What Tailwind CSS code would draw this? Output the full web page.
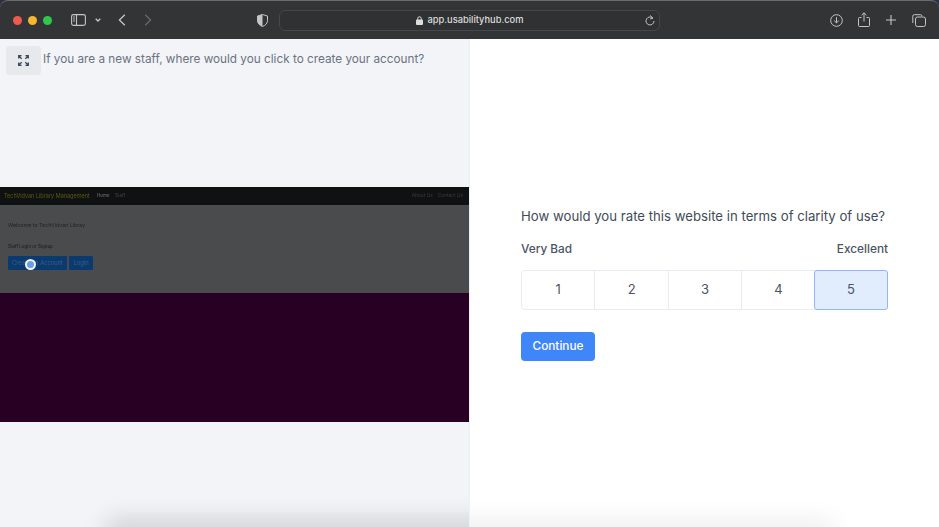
<!DOCTYPE html>
<html>
<head>
<meta charset="utf-8">
<script src="https://cdn.jsdelivr.net/npm/@tailwindcss/browser@4"></script>
</head>
<body class="font-['Inter',sans-serif] bg-[#2a3040] overflow-hidden">
<div class="relative w-[939px] h-[527px] overflow-hidden flex flex-col">
  <!-- browser chrome -->
  <div class="h-[39px] shrink-0 bg-[#333436] border-t border-[#6a6b6d] rounded-t-[8px] flex items-center text-[#c4c5c6]">
    <div class="flex items-center gap-[6px] ml-[13px]">
      <span class="w-[9px] h-[9px] rounded-full bg-[#ef5a50]"></span>
      <span class="w-[9px] h-[9px] rounded-full bg-[#f6b62e]"></span>
      <span class="w-[9px] h-[9px] rounded-full bg-[#2fc84a]"></span>
    </div>
    <svg class="ml-[19px]" width="15" height="12" viewBox="0 0 15 12" fill="none" stroke="#c4c5c6" stroke-width="1.1"><rect x="0.6" y="0.6" width="13.8" height="10.8" rx="1.8"/><path d="M5.5 .6v10.8"/><path d="M2 3h2M2 5h2M2 7h2" stroke-width="0.9"/></svg>
    <svg class="ml-[9px]" width="6" height="4" viewBox="0 0 6 4" fill="none" stroke="#c4c5c6" stroke-width="1.3"><path d="M.7.7 3 3l2.3-2.3"/></svg>
    <svg class="ml-[17px]" width="8" height="12" viewBox="0 0 8 12" fill="none" stroke="#c4c5c6" stroke-width="1.3"><path d="M6.8.8 1.4 6l5.4 5.2"/></svg>
    <svg class="ml-[18px]" width="8" height="12" viewBox="0 0 8 12" fill="none" stroke="#68696b" stroke-width="1.3"><path d="M1.2.8 6.6 6l-5.4 5.2"/></svg>
    <svg class="ml-[105px]" width="11" height="13" viewBox="0 0 11 13"><path d="M5.5.5 10.5 2v4.5c0 3-2.2 5-5 6-2.8-1-5-3-5-6V2z" fill="none" stroke="#c4c5c6"/><path d="M5.5.5 .5 2v4.500c0 3 2.200 5 5 6z" fill="#c4c5c6"/></svg>
    <div class="ml-[11px] w-[381px] h-[21px] rounded-[6px] border border-[#46474a] bg-[#303133] flex items-center relative">
      <div class="flex-1 flex items-center justify-center gap-[5px] text-[#dcdddd] text-[9.300px] font-medium">
        <svg width="7" height="9" viewBox="0 0 7 9"><path d="M1.7 4V2.600a1.800 1.800 0 0 1 3.600 0V4" fill="none" stroke="#dcdddd"/><rect y="3.600" width="7" height="5.400" rx="1" fill="#dcdddd"/></svg>
        <span>app.usabilityhub.com</span>
      </div>
      <svg class="absolute right-[4px] top-[4px]" width="10" height="11" viewBox="0 0 10 11" fill="none" stroke="#c4c5c6" stroke-width="1"><path d="M7.900 3.200A4 4 0 1 0 9 6"/><path d="M5.200.4 8 3.200 5 4" stroke-width="0.9"/></svg>
    </div>
    <svg class="ml-[170px]" width="13" height="13" viewBox="0 0 13 13" fill="none" stroke="#c4c5c6" stroke-width="1"><circle cx="6.500" cy="6.500" r="5.800"/><path d="M6.500 3.200v5.600M4.200 6.600l2.300 2.300 2.300-2.300"/></svg>
    <svg class="ml-[15px] -mt-[2px]" width="12" height="15" viewBox="0 0 12 15" fill="none" stroke="#c4c5c6" stroke-width="1"><path d="M3.500 5.500H1.500a1 1 0 0 0-1 1v7a1 1 0 0 0 1 1h9a1 1 0 0 0 1-1v-7a1 1 0 0 0-1-1H8.500"/><path d="M6 9.500V1M3.500 3.200 6 .8l2.500 2.400"/></svg>
    <svg class="ml-[16px]" width="10" height="10" viewBox="0 0 10 10" fill="none" stroke="#c4c5c6" stroke-width="1.1"><path d="M5 0v10M0 5h10"/></svg>
    <svg class="ml-[16px]" width="14" height="13" viewBox="0 0 14 13" fill="none" stroke="#c4c5c6" stroke-width="1"><path d="M.8 9V2.200A1.500 1.500 0 0 1 2.300.7h6.400a1.500 1.500 0 0 1 1.300 1.300"/><rect x="3.500" y="3" width="10" height="9.500" rx="2"/></svg>
  </div>
  <!-- body -->
  <div class="flex-1 flex min-h-0">
    <!-- left -->
    <div class="w-[469px] shrink-0 bg-[#f2f4f8] flex flex-col">
      <div class="h-[43px] shrink-0 flex items-start pt-[7px] pl-[6px] gap-[2px]">
        <button class="w-[35px] h-[29px] rounded-[4px] bg-[#e7e9ec] flex items-center justify-center">
          <svg width="11" height="11" viewBox="0 0 11 11" fill="none" stroke="#3d4a5c" stroke-width="1.300"><path d="M.7 3.500V.7h2.800M.7.7l3 3M10.300 3.500V.7H7.500M10.300.7l-3 3M.7 7.500v2.800h2.800M.7 10.300l3-3M10.300 7.500v2.800H7.500M10.300 10.300l-3-3"/></svg>
        </button>
        <p class="mt-[1px] text-[11.750px] leading-[24px] text-[#6b7280]">If you are a new staff, where would you click to create your account?</p>
      </div>
      <div class="flex-1 flex flex-col justify-center">
        <div class="h-[235px] flex flex-col relative">
          <div class="h-[18px] bg-[#101112] flex items-center justify-between pl-[4px] pr-[6px]">
            <div class="flex items-center blur-[0.4px]">
              <span class="w-[93px] text-[#5a5c10] text-[5.500px] whitespace-nowrap">TechVidvan Library Management</span>
              <span class="w-[18px] text-[#7a7a7a] text-[4.500px]">Home</span>
              <span class="text-[#444546] text-[4.500px]">Staff</span>
            </div>
            <div class="flex items-center gap-[5px] text-[#3a3b3c] text-[4.800px] blur-[0.4px]">
              <span>About Us</span><span>Contact Us</span>
            </div>
          </div>
          <div class="h-[88px] bg-[#4a4b4d] pl-[8px] pt-[16px]">
            <p class="text-[5.300px] leading-[8px] text-[#222325] blur-[0.4px]">Welcome to TechVidvan Libray</p>
            <p class="mt-[15px] text-[4.500px] leading-[6px] text-[#18191a] blur-[0.4px]">Staff Login or Signup</p>
            <div class="mt-[6px] flex gap-[2px]">
              <span class="w-[59px] h-[14px] rounded-[1px] bg-[#0a3a6e] flex items-center justify-center"><span class="text-[#3d5f85] text-[5.800px] blur-[0.4px]">Create an Account</span></span>
              <span class="w-[24px] h-[14px] rounded-[1px] bg-[#0a3a6e] flex items-center justify-center"><span class="text-[#3d5f85] text-[5.800px] blur-[0.4px]">Login</span></span>
            </div>
          </div>
          <div class="flex-1 bg-[#270024]"></div>
          <span class="absolute left-[25px] top-[72px] w-[11px] h-[11px] rounded-full bg-[#6a9ce8] border-2 border-white/90"></span>
        </div>
      </div>
    </div>
    <!-- right -->
    <div class="flex-1 bg-white border-l border-[#eef0f3] flex flex-col justify-center pl-[51px] pr-[51px] pt-[1px]">
      <div>
        <p class="text-[13.200px] leading-[20px] text-[#414b58]">How would you rate this website in terms of clarity of use?</p>
        <div class="mt-[13px] flex justify-between text-[11.800px] leading-[20px] font-medium text-[#4a5565]">
          <span>Very Bad</span><span>Excellent</span>
        </div>
        <div class="mt-[11px] h-[40px] flex rounded-[4px] border border-[#e8ecf2] text-[13px] text-[#4b5563]">
          <div class="flex-1 flex items-center justify-center border-r border-[#e8ecf2]">1</div>
          <div class="flex-1 flex items-center justify-center border-r border-[#e8ecf2]">2</div>
          <div class="flex-1 flex items-center justify-center border-r border-[#e8ecf2]">3</div>
          <div class="flex-1 flex items-center justify-center">4</div>
          <div class="flex-1 flex items-center justify-center bg-[#e1edfd] border-[1.500px] border-[#8fb8f8] rounded-[3px] -m-px">5</div>
        </div>
        <button class="mt-[22px] w-[74px] h-[29px] rounded-[4px] bg-[#3f86f8] text-white text-[11.800px] font-medium flex items-center justify-center">Continue</button>
      </div>
    </div>
  </div>
  <!-- shadow of the window below, darker over the left panel -->
  <div class="absolute left-0 top-[480px] w-[469px] h-[47px] overflow-hidden">
    <div class="absolute left-[114px] w-[500px] top-[47px] h-[10px] shadow-[0_0_24px_7px_rgba(0,0,0,0.16)]"></div>
  </div>
  <div class="absolute left-[470px] top-[480px] w-[469px] h-[47px] overflow-hidden">
    <div class="absolute left-[-100px] w-[456px] top-[47px] h-[10px] shadow-[0_0_24px_7px_rgba(0,0,0,0.07)]"></div>
  </div>
</div>
</body>
</html>
